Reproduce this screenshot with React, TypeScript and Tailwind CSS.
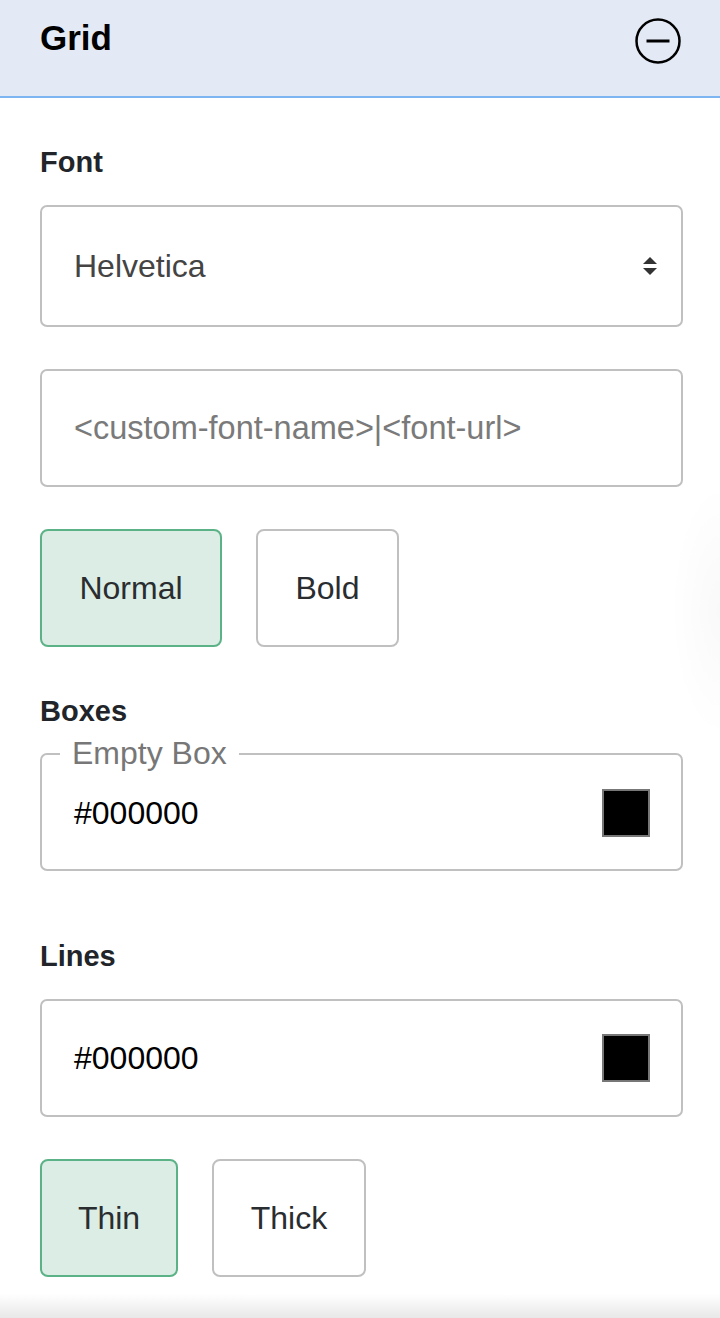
export default function App() {
  return (
    <div className="relative flex h-[1318px] w-[720px] flex-col overflow-hidden bg-white font-['Liberation_Sans',Arial,sans-serif]">
      {/* Header */}
      <div className="flex h-[98px] items-start justify-between border-b-2 border-[#7cb5f2] bg-[#e3e9f5] pl-[40px] pr-[38px] pt-[17px]">
        <div className="mt-[1px] text-[35px] font-bold leading-[40px] text-black">Grid</div>
        <svg width="48" height="48" viewBox="0 0 48 48" fill="none">
          <circle cx="24" cy="24" r="21.5" stroke="#000" strokeWidth="2.5" />
          <line x1="12.5" y1="24" x2="35.5" y2="24" stroke="#000" strokeWidth="3" />
        </svg>
      </div>

      <div className="flex flex-col pl-[40px] pr-[37px]">
        {/* Font */}
        <div className="mt-[47px] text-[29px] font-bold leading-[34px] text-[#212529]">Font</div>
        <div className="mt-[26px] flex h-[122px] items-center justify-between rounded-[7px] border-2 border-[#c0c0c0] pl-[32px] pr-[24px]">
          <span className="text-[32px] text-[#444]">Helvetica</span>
          <svg width="14" height="18" viewBox="0 0 14 18">
            <path d="M7 0 L14 7 L0 7 Z" fill="#333" />
            <path d="M0 11 L14 11 L7 18 Z" fill="#333" />
          </svg>
        </div>
        <input
          className="mt-[42px] h-[118px] w-full rounded-[7px] border-2 border-[#c0c0c0] px-[32px] text-[32.5px] text-[#444] outline-none placeholder:text-[#7a7a7a]"
          placeholder="<custom-font-name>|<font-url>"
        />
        <div className="mt-[42px] flex gap-[34px]">
          <div className="flex h-[118px] w-[182px] items-center justify-center rounded-[8px] border-2 border-[#5cb287] bg-[#dbede4] text-[32px] text-[#2a2d30]">
            Normal
          </div>
          <div className="flex h-[118px] w-[143px] items-center justify-center rounded-[8px] border-2 border-[#c0c0c0] bg-white text-[32px] text-[#2a2d30]">
            Bold
          </div>
        </div>

        {/* Boxes */}
        <div className="mt-[47px] text-[29px] font-bold leading-[34px] text-[#212529]">Boxes</div>
        <fieldset className="mt-[10px] rounded-[7px] border-2 border-[#c0c0c0] pl-[32px] pr-[31px]">
          <legend className="-ml-[14px] px-[12px] text-[32px] leading-[31px] text-[#777]">Empty Box</legend>
          <div className="mb-[32px] mt-[20px] flex h-[48px] items-center justify-between">
            <span className="text-[32px] text-black">#000000</span>
            <div className="h-[48px] w-[48px] border-2 border-[#777] bg-black" />
          </div>
        </fieldset>

        {/* Lines */}
        <div className="mt-[68px] text-[29px] font-bold leading-[34px] text-[#212529]">Lines</div>
        <div className="mt-[26px] flex h-[118px] items-center justify-between rounded-[7px] border-2 border-[#c0c0c0] pl-[32px] pr-[31px]">
          <span className="text-[32px] text-black">#000000</span>
          <div className="h-[48px] w-[48px] border-2 border-[#777] bg-black" />
        </div>
        <div className="mt-[42px] flex gap-[34px]">
          <div className="flex h-[118px] w-[138px] items-center justify-center rounded-[8px] border-2 border-[#5cb287] bg-[#dbede4] text-[32px] text-[#2a2d30]">
            Thin
          </div>
          <div className="flex h-[118px] w-[154px] items-center justify-center rounded-[8px] border-2 border-[#c0c0c0] bg-white text-[32px] text-[#2a2d30]">
            Thick
          </div>
        </div>
      </div>

      <div className="mt-auto h-[24px] bg-linear-to-b from-white to-[#e8e8e8]" />
      <div className="pointer-events-none absolute right-0 top-[480px] h-[260px] w-[50px] bg-[radial-gradient(ellipse_at_right,rgba(0,0,0,0.025),transparent_70%)]" />
    </div>
  );
}
